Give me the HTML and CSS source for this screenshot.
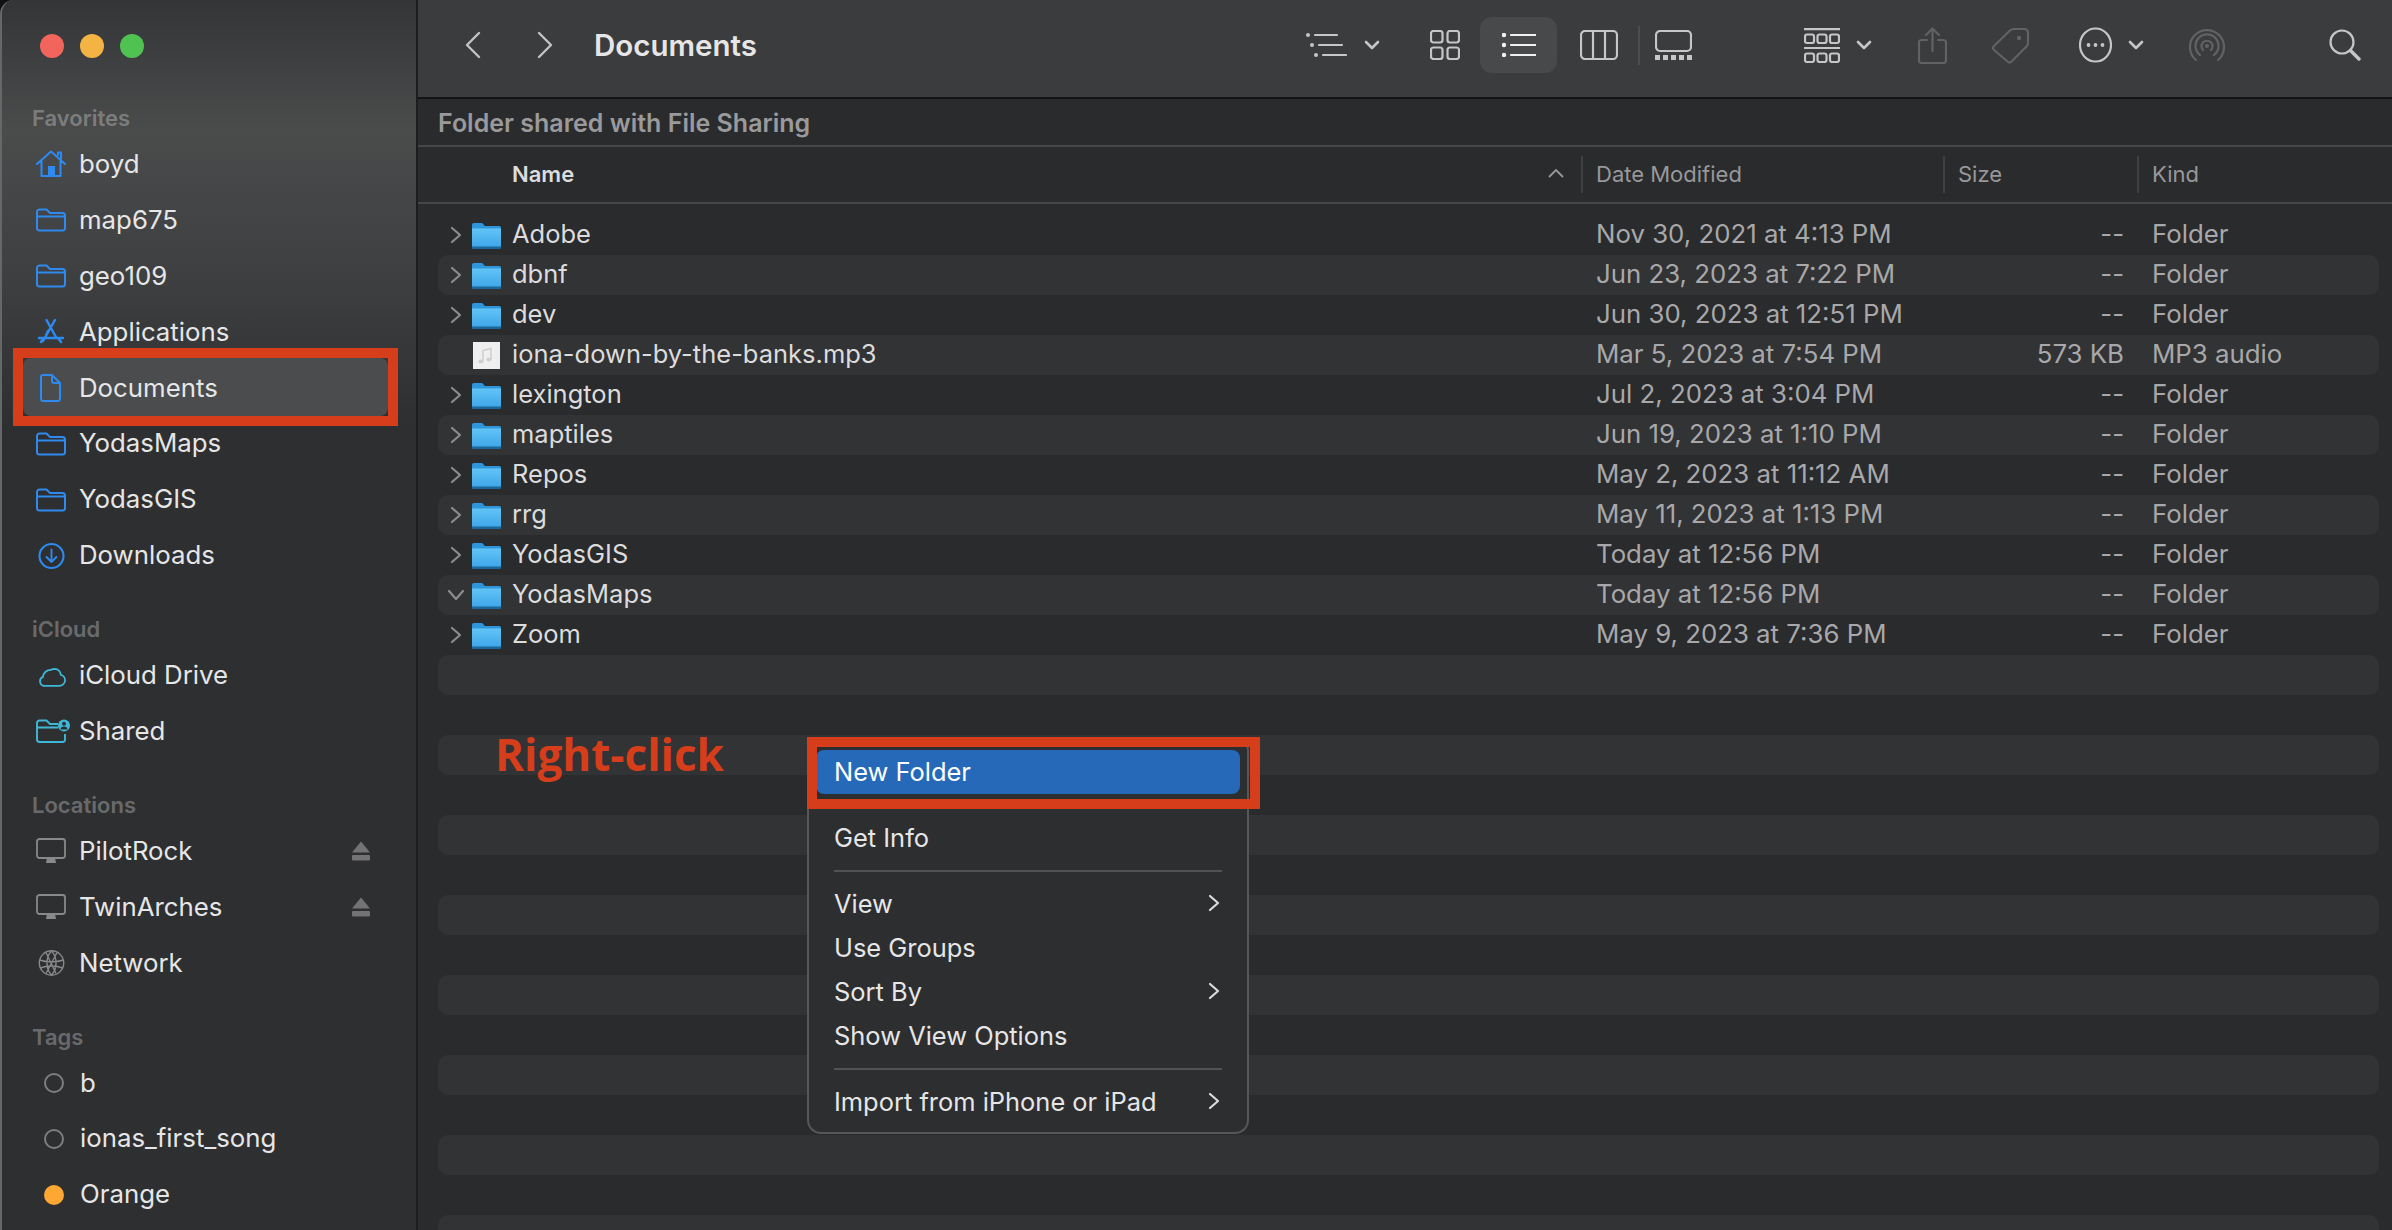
FILE: index.html
```html
<!DOCTYPE html>
<html lang="en">

<head>
  <meta charset="UTF-8">
  <title>Documents</title>
  <link rel="stylesheet" href="styles.css">
</head>

<body>
  <!-- shared icons -->
  <svg class="defs" width="0" height="0">
    <defs>
      <linearGradient id="fgrad" x1="0" y1="0" x2="0" y2="1">
        <stop offset="0" stop-color="#62c4f6" />
        <stop offset="1" stop-color="#3ea6e8" />
      </linearGradient>
      <symbol id="file-folder" viewBox="0 0 29 27">
        <path d="M0 3a2 2 0 0 1 2-2h8l3 3h14a2 2 0 0 1 2 2v19a2 2 0 0 1-2 2H2a2 2 0 0 1-2-2z" fill="#2f96dc" />
        <path d="M0 6.500h29V24a1.500 1.500 0 0 1-1.500 1.500h-26A1.500 1.500 0 0 1 0 24z" fill="url(#fgrad)" />
        <path d="M0 24.500h29V25a2 2 0 0 1-2 2H2a2 2 0 0 1-2-2z" fill="#1c679c" />
      </symbol>
      <symbol id="side-folder" viewBox="0 0 30 24">
        <path d="M1 4a2.500 2.500 0 0 1 2.500-2.500h7L14 5h12.500A2.500 2.500 0 0 1 29 7.500V20a2.500 2.500 0 0 1-2.500 2.500h-23A2.500 2.500 0 0 1 1 20zM1 8.500h28" fill="none" stroke="currentColor" stroke-width="2" />
      </symbol>
      <symbol id="monitor" viewBox="0 0 30 26">
        <rect x="1" y="1" width="28" height="19" rx="2.500" fill="none" stroke="currentColor" stroke-width="1.800" />
        <path d="M11 20h8l1 5h-10z" fill="currentColor" />
      </symbol>
      <symbol id="eject" viewBox="0 0 20 20">
        <path d="M10 0.500l9 11H1z" fill="currentColor" />
        <rect x="1" y="14" width="18" height="5.500" rx="1" fill="currentColor" />
      </symbol>
      <symbol id="chev-r" viewBox="0 0 12 18">
        <path d="M2 2l8 7-8 7" fill="none" stroke="currentColor" stroke-width="2.200" stroke-linecap="round" stroke-linejoin="round" />
      </symbol>
      <symbol id="chev-d" viewBox="0 0 16 10">
        <path d="M2 2l6 6 6-6" fill="none" stroke="currentColor" stroke-width="2.600" stroke-linecap="round" stroke-linejoin="round" />
      </symbol>
    </defs>
  </svg>

  <div class="window">
    <aside class="sidebar">
      <div class="lights">
        <span class="light red"></span>
        <span class="light yellow"></span>
        <span class="light green"></span>
      </div>

      <div class="side-title first">Favorites</div>
      <div class="side-row blue">
        <svg class="side-icon" viewBox="0 0 30 28">
          <path d="M1 14L15 1.500 29 14M22 5V2.500h3V9M5.500 11v15h19V11" fill="none" stroke="currentColor" stroke-width="2.100" stroke-linejoin="round" stroke-linecap="round" />
          <rect x="12" y="16" width="7" height="10" fill="currentColor" />
        </svg>
        <span>boyd</span>
      </div>
      <div class="side-row blue"><svg class="side-icon"><use href="#side-folder" /></svg><span>map675</span></div>
      <div class="side-row blue"><svg class="side-icon"><use href="#side-folder" /></svg><span>geo109</span></div>
      <div class="side-row blue">
        <svg class="side-icon" viewBox="0 0 30 28">
          <path d="M10.500 2l10 18M19 2L7 23M3 20h24M5 24l3-4M25 24l-3-4M12 13l-2 4" fill="none" stroke="currentColor" stroke-width="2.500" stroke-linecap="round" />
        </svg>
        <span>Applications</span>
      </div>
      <div class="side-row blue selected">
        <svg class="side-icon" viewBox="0 0 30 28">
          <path d="M7 1h9l8 8v15.500a2.500 2.500 0 0 1-2.500 2.500h-14A2.500 2.500 0 0 1 5 24.500V3a2 2 0 0 1 2-2zM16 1v6a2 2 0 0 0 2 2h6" fill="none" stroke="currentColor" stroke-width="2" stroke-linejoin="round" />
        </svg>
        <span>Documents</span>
      </div>
      <div class="side-row blue"><svg class="side-icon"><use href="#side-folder" /></svg><span>YodasMaps</span></div>
      <div class="side-row blue"><svg class="side-icon"><use href="#side-folder" /></svg><span>YodasGIS</span></div>
      <div class="side-row blue">
        <svg class="side-icon" viewBox="0 0 30 28">
          <circle cx="15.500" cy="14" r="12" fill="none" stroke="currentColor" stroke-width="2.100" />
          <path d="M15.500 7.500V20M10.500 15l5 5 5-5" fill="none" stroke="currentColor" stroke-width="1.900" stroke-linecap="round" stroke-linejoin="round" />
        </svg>
        <span>Downloads</span>
      </div>

      <div class="side-title">iCloud</div>
      <div class="side-row cyan">
        <svg class="side-icon" viewBox="0 0 32 24">
          <path d="M8 22.500h17a6 6 0 0 0 1.500-11.800A7 7 0 0 0 20 4.500a9 9 0 0 0-4 1A8 8 0 0 0 7.500 13 5 5 0 0 0 8 22.500z" fill="none" stroke="currentColor" stroke-width="1.900" stroke-linejoin="round" />
        </svg>
        <span>iCloud Drive</span>
      </div>
      <div class="side-row cyan">
        <svg class="side-icon wide" viewBox="0 0 34 24">
          <path d="M1 4a2.500 2.500 0 0 1 2.500-2.500h7L14 5h8M1 8.500h21M29 15v5.500a2.500 2.500 0 0 1-2.500 2.500h-23A2.500 2.500 0 0 1 1 20.500V4" fill="none" stroke="currentColor" stroke-width="1.900" />
          <circle cx="28" cy="6.500" r="6" fill="currentColor" />
          <circle cx="28" cy="4.800" r="2" fill="#2e2f31" />
          <path d="M24.500 10.500a3.500 3 0 0 1 7 0z" fill="#2e2f31" />
        </svg>
        <span>Shared</span>
      </div>

      <div class="side-title">Locations</div>
      <div class="side-row gray">
        <svg class="side-icon"><use href="#monitor" /></svg><span>PilotRock</span>
        <svg class="eject"><use href="#eject" /></svg>
      </div>
      <div class="side-row gray">
        <svg class="side-icon"><use href="#monitor" /></svg><span>TwinArches</span>
        <svg class="eject"><use href="#eject" /></svg>
      </div>
      <div class="side-row gray">
        <svg class="side-icon" viewBox="0 0 30 28">
          <g fill="none" stroke="currentColor" stroke-width="1.400">
            <circle cx="15.500" cy="14" r="12.200" />
            <path d="M15.500 2c-6 6-6 18 0 24M15.500 2c6 6 6 18 0 24M3.500 11c7 2.500 17 2.500 24 0M4 19c7-2.500 16-2.500 23 0M10 3.500l10 21M21 3.500l-11 21" />
          </g>
        </svg>
        <span>Network</span>
      </div>

      <div class="side-title">Tags</div>
      <div class="side-row"><span class="tag-dot"></span><span>b</span></div>
      <div class="side-row"><span class="tag-dot"></span><span>ionas_first_song</span></div>
      <div class="side-row"><span class="tag-dot orange"></span><span>Orange</span></div>
    </aside>

    <main class="main">
      <header class="toolbar">
        <svg class="nav-btn" viewBox="0 0 16 28"><path d="M14 2L2 14l12 12" /></svg>
        <svg class="nav-btn next" viewBox="0 0 16 28"><path d="M2 2l12 12L2 26" /></svg>
        <h1 class="title">Documents</h1>

        <div class="tools">
          <svg class="tool t-sort" viewBox="0 0 41 24">
            <path class="ln" d="M9 2h22M13 12h23M17 22h23" />
            <circle cx="2" cy="2" r="2" /><circle cx="6" cy="12" r="2" /><circle cx="10" cy="22" r="2" />
          </svg>
          <svg class="tool t-chev"><use href="#chev-d" /></svg>
          <svg class="tool t-grid" viewBox="0 0 30 30">
            <g class="ln">
              <rect x="1" y="1" width="11.500" height="11.500" rx="2.500" /><rect x="17.500" y="1" width="11.500" height="11.500" rx="2.500" />
              <rect x="1" y="17.500" width="11.500" height="11.500" rx="2.500" /><rect x="17.500" y="17.500" width="11.500" height="11.500" rx="2.500" />
            </g>
          </svg>
          <div class="t-active">
            <svg class="tool t-list" viewBox="0 0 34 24">
              <path class="ln" d="M9 2h25M9 12h25M9 22h25" />
              <circle cx="2" cy="2" r="2.200" /><circle cx="2" cy="12" r="2.200" /><circle cx="2" cy="22" r="2.200" />
            </svg>
          </div>
          <svg class="tool t-cols" viewBox="0 0 38 30">
            <g class="ln"><rect x="1" y="1" width="36" height="28" rx="4" /><path d="M13 1v28M25 1v28" /></g>
          </svg>
          <span class="t-div"></span>
          <svg class="tool t-gallery" viewBox="0 0 37 30">
            <rect class="ln" x="1" y="1" width="35" height="20" rx="4" />
            <path d="M0 25h5v5H0zM8 25h5v5H8zM16 25h5v5h-5zM24 25h5v5h-5zM32 25h5v5h-5z" />
          </svg>
          <svg class="tool t-group" viewBox="0 0 36 35">
            <g class="ln">
              <path d="M0 1.200h36M0 20h36" />
              <rect x="1" y="6.500" width="9" height="8.500" rx="2" /><rect x="13.500" y="6.500" width="9" height="8.500" rx="2" /><rect x="26" y="6.500" width="9" height="8.500" rx="2" />
              <rect x="1" y="25.500" width="9" height="8.500" rx="2" /><rect x="13.500" y="25.500" width="9" height="8.500" rx="2" /><rect x="26" y="25.500" width="9" height="8.500" rx="2" />
            </g>
          </svg>
          <svg class="tool t-chev2"><use href="#chev-d" /></svg>
          <svg class="tool t-share dim" viewBox="0 0 29 37">
            <path class="ln" d="M9 13H3.500A2.500 2.500 0 0 0 1 15.500v18A2.500 2.500 0 0 0 3.500 36h22a2.500 2.500 0 0 0 2.500-2.500v-18a2.500 2.500 0 0 0-2.500-2.500H20M14.500 24V2M8 8l6.500-6.500L21 8" />
          </svg>
          <svg class="tool t-tag dim" viewBox="0 0 38 37">
            <path class="ln" d="M2 19L18 3.500Q20 2 22 2h10q4 0 4 4v10q0 2-1.500 3.500L19.500 34.500q-2 2-4 0L2 23q-2-2 0-4z" />
            <circle cx="27" cy="11" r="2.200" />
          </svg>
          <svg class="tool t-more" viewBox="0 0 33 36">
            <ellipse class="ln" cx="16.500" cy="18" rx="15.500" ry="16.500" />
            <circle cx="9.500" cy="18" r="1.900" /><circle cx="16.500" cy="18" r="1.900" /><circle cx="23.500" cy="18" r="1.900" />
          </svg>
          <svg class="tool t-chev3"><use href="#chev-d" /></svg>
          <svg class="tool t-air dim" viewBox="0 0 36 34">
            <path class="ln" d="M7 32A17 17 0 1 1 29 32M11 27A11.500 11.500 0 1 1 25 27M14 22A5.500 5.500 0 1 1 22 22" />
            <circle cx="18" cy="18" r="2" />
          </svg>
          <svg class="tool t-search" viewBox="0 0 32 32">
            <circle class="ln" cx="13" cy="13" r="11.500" />
            <path class="ln thick" d="M21.500 21.500L30 30" />
          </svg>
        </div>
      </header>

      <div class="banner">Folder shared with File Sharing</div>

      <div class="col-head">
        <div class="col-name">
          <span>Name</span>
          <svg class="sort-arrow" viewBox="0 0 16 9"><path d="M1 8l7-7 7 7" /></svg>
        </div>
        <div class="col">Date Modified</div>
        <div class="col">Size</div>
        <div class="col">Kind</div>
      </div>

      <div class="list">
        <div class="row"><div class="name"><svg class="disc"><use href="#chev-r" /></svg><svg class="ficon"><use href="#file-folder" /></svg>Adobe</div><div class="date">Nov 30, 2021 at 4:13 PM</div><div class="size">--</div><div class="kind">Folder</div></div>
        <div class="row"><div class="name"><svg class="disc"><use href="#chev-r" /></svg><svg class="ficon"><use href="#file-folder" /></svg>dbnf</div><div class="date">Jun 23, 2023 at 7:22 PM</div><div class="size">--</div><div class="kind">Folder</div></div>
        <div class="row"><div class="name"><svg class="disc"><use href="#chev-r" /></svg><svg class="ficon"><use href="#file-folder" /></svg>dev</div><div class="date">Jun 30, 2023 at 12:51 PM</div><div class="size">--</div><div class="kind">Folder</div></div>
        <div class="row">
          <div class="name">
            <span class="disc"></span>
            <svg class="ficon" viewBox="0 0 29 27">
              <rect x="1" y="0" width="27" height="27" fill="#efefef" />
              <path d="M11 8.500l8-2v10.500M11 8.500V19" fill="none" stroke="#cfcfcf" stroke-width="1.500" />
              <ellipse cx="9" cy="19.500" rx="2.600" ry="2" fill="#cfcfcf" /><ellipse cx="17" cy="17.500" rx="2.600" ry="2" fill="#cfcfcf" />
            </svg>
            iona-down-by-the-banks.mp3
          </div>
          <div class="date">Mar 5, 2023 at 7:54 PM</div><div class="size">573 KB</div><div class="kind">MP3 audio</div>
        </div>
        <div class="row"><div class="name"><svg class="disc"><use href="#chev-r" /></svg><svg class="ficon"><use href="#file-folder" /></svg>lexington</div><div class="date">Jul 2, 2023 at 3:04 PM</div><div class="size">--</div><div class="kind">Folder</div></div>
        <div class="row"><div class="name"><svg class="disc"><use href="#chev-r" /></svg><svg class="ficon"><use href="#file-folder" /></svg>maptiles</div><div class="date">Jun 19, 2023 at 1:10 PM</div><div class="size">--</div><div class="kind">Folder</div></div>
        <div class="row"><div class="name"><svg class="disc"><use href="#chev-r" /></svg><svg class="ficon"><use href="#file-folder" /></svg>Repos</div><div class="date">May 2, 2023 at 11:12 AM</div><div class="size">--</div><div class="kind">Folder</div></div>
        <div class="row"><div class="name"><svg class="disc"><use href="#chev-r" /></svg><svg class="ficon"><use href="#file-folder" /></svg>rrg</div><div class="date">May 11, 2023 at 1:13 PM</div><div class="size">--</div><div class="kind">Folder</div></div>
        <div class="row"><div class="name"><svg class="disc"><use href="#chev-r" /></svg><svg class="ficon"><use href="#file-folder" /></svg>YodasGIS</div><div class="date">Today at 12:56 PM</div><div class="size">--</div><div class="kind">Folder</div></div>
        <div class="row"><div class="name"><svg class="disc open"><use href="#chev-r" /></svg><svg class="ficon"><use href="#file-folder" /></svg>YodasMaps</div><div class="date">Today at 12:56 PM</div><div class="size">--</div><div class="kind">Folder</div></div>
        <div class="row"><div class="name"><svg class="disc"><use href="#chev-r" /></svg><svg class="ficon"><use href="#file-folder" /></svg>Zoom</div><div class="date">May 9, 2023 at 7:36 PM</div><div class="size">--</div><div class="kind">Folder</div></div>
        <div class="row"></div><div class="row"></div><div class="row"></div><div class="row"></div><div class="row"></div>
        <div class="row"></div><div class="row"></div><div class="row"></div><div class="row"></div><div class="row"></div>
        <div class="row"></div><div class="row"></div><div class="row"></div><div class="row"></div><div class="row"></div>
      </div>
    </main>
  </div>

  <!-- right click menu -->
  <div class="menu">
    <div class="menu-item active">New Folder</div>
    <div class="menu-sep"></div>
    <div class="menu-item">Get Info</div>
    <div class="menu-sep"></div>
    <div class="menu-item">View<svg class="menu-arrow"><use href="#chev-r" /></svg></div>
    <div class="menu-item">Use Groups</div>
    <div class="menu-item">Sort By<svg class="menu-arrow"><use href="#chev-r" /></svg></div>
    <div class="menu-item">Show View Options</div>
    <div class="menu-sep"></div>
    <div class="menu-item">Import from iPhone or iPad<svg class="menu-arrow"><use href="#chev-r" /></svg></div>
  </div>

  <!-- annotations -->
  <div class="mark mark-side"></div>
  <div class="mark mark-menu"></div>
  <div class="note">Right-click</div>
</body>

</html>
```

FILE: styles.css
```css
* {
  box-sizing: border-box;
}

body {
  margin: 0;
  height: 1230px;
  overflow: hidden;
  position: relative;
  background: #111;
  font-family: Inter, "Liberation Sans", sans-serif;
  font-size: 25.500px;
  color: #dcdcdd;
}

.defs {
  position: absolute;
}

.window {
  display: flex;
  height: 1230px;
}

/* sidebar */
.sidebar {
  width: 418px;
  flex: none;
  padding-top: 34px;
  border-left: 2px solid #666769;
  border-right: 2px solid #1c1d1f;
  border-top-left-radius: 14px;
  background: linear-gradient(#343537 0, #4a4b4b 130px, #3e3f41 280px, #2e2f31 420px);
  color: #e6e6e7;
  font-size: 25.800px;
}

.lights {
  display: flex;
  gap: 16px;
  padding-left: 38px;
  height: 24px;
}

.light {
  width: 24px;
  height: 24px;
  border-radius: 50%;
}

.red { background: #f1655c; }
.yellow { background: #f4b443; }
.green { background: #50c252; }

.side-title {
  height: 37px;
  margin-top: 27px;
  padding-left: 30px;
  line-height: 37px;
  font-size: 22px;
  font-weight: 600;
  color: rgba(255, 255, 255, .3);
}

.side-title.first {
  margin-top: 42px;
}

.side-row {
  display: flex;
  align-items: center;
  height: 55.900px;
  padding: 0 0 3px 34px;
}

.side-row.selected {
  background: #4b4c4d;
  height: 58.900px;
  margin: -3px 28px 0 21px;
  padding: 0 0 0 13px;
  border-radius: 8px;
}

.side-icon {
  width: 30px;
  height: 28px;
  flex: none;
  margin: 2px 13px 0 0;
}

.side-icon.wide {
  width: 34px;
  margin-right: 9px;
}

.blue .side-icon { color: #2e8aee; }
.cyan .side-icon { color: #3fb8d8; }
.gray .side-icon { color: #89898b; }

.eject {
  width: 20px;
  height: 20px;
  margin: 2px 45px 0 auto;
  color: #737375;
}

.tag-dot {
  width: 20px;
  height: 20px;
  flex: none;
  margin: 2px 16px 0 8px;
  border: 2px solid #7e7e80;
  border-radius: 50%;
}

.tag-dot.orange {
  background: #ffa733;
  border-color: #ffa733;
}

/* main */
.main {
  flex: 1;
  display: flex;
  flex-direction: column;
  min-width: 0;
  background: #2a2b2d;
}

.toolbar {
  display: flex;
  align-items: center;
  flex: none;
  height: 99px;
  padding: 0 31px 7px 47px;
  background: #3b3c3e;
  border-bottom: 2px solid #141416;
}

.nav-btn {
  width: 16px;
  height: 28px;
  flex: none;
  fill: none;
  stroke: #c2c2c3;
  stroke-width: 2.400;
  stroke-linecap: round;
  stroke-linejoin: round;
}

.nav-btn.next {
  margin-left: 56px;
}

.title {
  margin: 0 0 0 41px;
  font-size: 29.500px;
  font-weight: 600;
  color: #e6e6e7;
}

.tools {
  margin-left: auto;
  display: flex;
  align-items: center;
}

.tool {
  flex: none;
  fill: #c6c6c7;
  color: #c6c6c7;
}

.tool .ln,
.tool.ln {
  fill: none;
  stroke: #c6c6c7;
  stroke-width: 2.200;
  stroke-linecap: round;
  stroke-linejoin: round;
}

.tool .thick {
  stroke-width: 3.400;
}

.tool.dim {
  fill: #616264;
}

.tool.dim .ln {
  stroke: #616264;
}

.t-sort { width: 41px; height: 24px; }
.t-chev, .t-chev2, .t-chev3 { width: 16px; height: 10px; }
.t-chev { margin-left: 17px; }
.t-grid { width: 30px; height: 30px; margin-left: 50px; }

.t-active {
  display: flex;
  align-items: center;
  justify-content: center;
  width: 77px;
  height: 56px;
  margin-left: 20px;
  border-radius: 12px;
  background: #48494b;
}

.t-list { width: 34px; height: 24px; fill: #f0f0f1; }
.t-list .ln { stroke: #f0f0f1 !important; }
.t-cols { width: 38px; height: 30px; margin-left: 23px; }

.t-div {
  width: 2px;
  height: 39px;
  margin-left: 20px;
  background: #4c4d4f;
}

.t-gallery { width: 37px; height: 30px; margin-left: 15px; }
.t-group { width: 36px; height: 35px; margin-left: 112px; }
.t-chev2 { margin-left: 16px; }
.t-share { width: 29px; height: 37px; margin-left: 46px; }
.t-tag { width: 38px; height: 37px; margin-left: 45px; }
.t-more { width: 33px; height: 36px; margin-left: 49px; }
.t-chev3 { margin-left: 16px; }
.t-air { width: 36px; height: 34px; margin-left: 45px; }
.t-search { width: 32px; height: 32px; margin-left: 104px; }

.banner {
  flex: none;
  height: 48px;
  padding-left: 20px;
  line-height: 49px;
  font-size: 25px;
  font-weight: 600;
  color: #9a9a9c;
  border-bottom: 2px solid #454648;
}

.col-head {
  flex: none;
  display: grid;
  grid-template-columns: 1143px 362px 194px 1fr;
  align-items: center;
  height: 57px;
  padding-left: 20px;
  font-size: 22px;
  border-bottom: 2px solid #454648;
  color: #98989a;
}

.col-name {
  display: flex;
  align-items: center;
  justify-content: space-between;
  padding: 0 17px 2px 74px;
  font-weight: 600;
  color: #dcdcdd;
}

.sort-arrow {
  width: 16px;
  height: 9px;
  fill: none;
  stroke: #98989a;
  stroke-width: 1.800;
}

.col {
  height: 37px;
  line-height: 37px;
  padding-left: 13px;
  border-left: 2px solid #3f4042;
}

.list {
  flex: 1;
  min-height: 0;
  overflow: hidden;
  padding: 11px 13px 0 20px;
}

.row {
  display: grid;
  grid-template-columns: 1158px 401px 127px 1fr;
  align-items: center;
  height: 40px;
  padding-bottom: 3px;
  border-radius: 10px;
}

.row:nth-child(even) {
  background: #323335;
}

.name {
  display: flex;
  align-items: center;
  color: #dcdcdd;
}

.disc {
  width: 12px;
  height: 18px;
  flex: none;
  margin: 3px 10px 0 12px;
  color: #8c8c8e;
}

.disc.open {
  transform: rotate(90deg);
}

.ficon {
  width: 29px;
  height: 27px;
  flex: none;
  margin: 3px 11px 0 0;
}

.date,
.size,
.kind {
  font-size: 25.800px;
  color: #a8a8aa;
}

.size {
  text-align: right;
}

.kind {
  padding-left: 28px;
}

/* context menu */
.menu {
  position: absolute;
  left: 807px;
  top: 737px;
  width: 442px;
  height: 397px;
  padding: 11px 7px 0;
  background: #2d2e30;
  border: 2px solid #565759;
  border-radius: 14px;
  font-size: 25.450px;
  color: #e6e6e7;
}

.menu-item {
  display: flex;
  align-items: center;
  justify-content: space-between;
  height: 44px;
  padding: 0 20px 2px 18px;
  border-radius: 8px;
}

.menu-item.active {
  background: #2569b8;
  color: #fff;
}

.menu-sep {
  height: 2px;
  margin: 10px 18px;
  background: #515254;
}

.menu-arrow {
  width: 12px;
  height: 18px;
  color: #dcdcdd;
}

/* red annotations on top of the screenshot */
.mark {
  position: absolute;
  border: 10px solid #d53d1b;
}

.mark-side {
  left: 13px;
  top: 348px;
  width: 385px;
  height: 78px;
}

.mark-menu {
  left: 807px;
  top: 737px;
  width: 453px;
  height: 72px;
}

.note {
  position: absolute;
  left: 495px;
  top: 724px;
  font-family: "Open Sans", sans-serif;
  font-size: 44px;
  line-height: 60px;
  font-weight: 700;
  color: #d53d1b;
}
```
